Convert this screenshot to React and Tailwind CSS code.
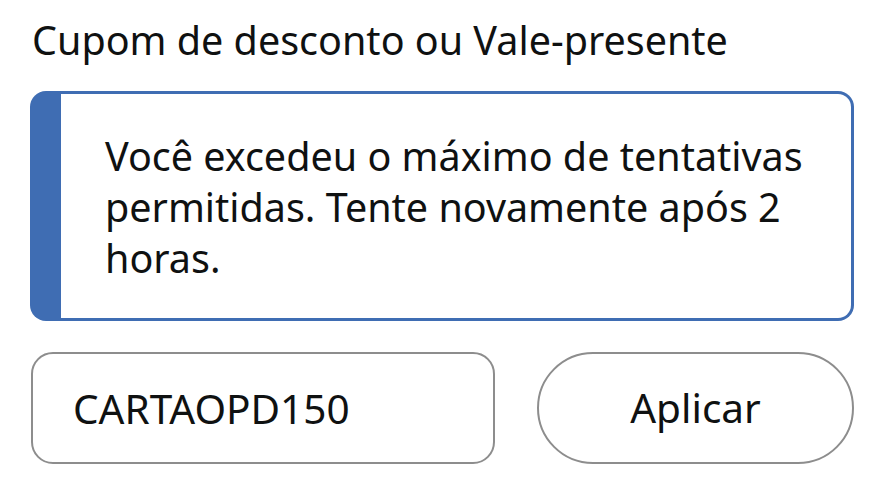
export default function App() {
  return (
    <div className="min-h-[500px] w-[894px] bg-white text-[#0f1111] font-['Noto_Sans',sans-serif]">
      <h2 className="pl-[32px] pt-[16px] text-[39.5px] leading-[48px]">Cupom de desconto ou Vale-presente</h2>

      {/* alert: blue bar on the left, thin blue border around */}
      <div className="ml-[30px] mt-[27px] w-[824px] rounded-[16px] bg-[#3f6db3] p-[3px] pl-[31px]">
        <div className="rounded-r-[13px] bg-white pl-[44px] pr-[20px] pt-[37px] pb-[34px]">
          <p className="text-[39.5px] leading-[51px]">
            Você excedeu o máximo de tentativas permitidas. Tente novamente após 2 horas.
          </p>
        </div>
      </div>

      <div className="ml-[31px] mt-[31px] flex w-[823px] gap-[42px]">
        <input
          type="text"
          defaultValue="CARTAOPD150"
          className="h-[112px] w-[464px] rounded-[22px] border-2 border-[#8d8d8d] bg-white pl-[40px] text-[40.5px] text-[#0f1111] outline-none"
        />
        <button className="h-[112px] flex-1 rounded-full border-2 border-[#8d8d8d] bg-white text-[40.5px] text-[#0f1111]">
          Aplicar
        </button>
      </div>
    </div>
  );
}
